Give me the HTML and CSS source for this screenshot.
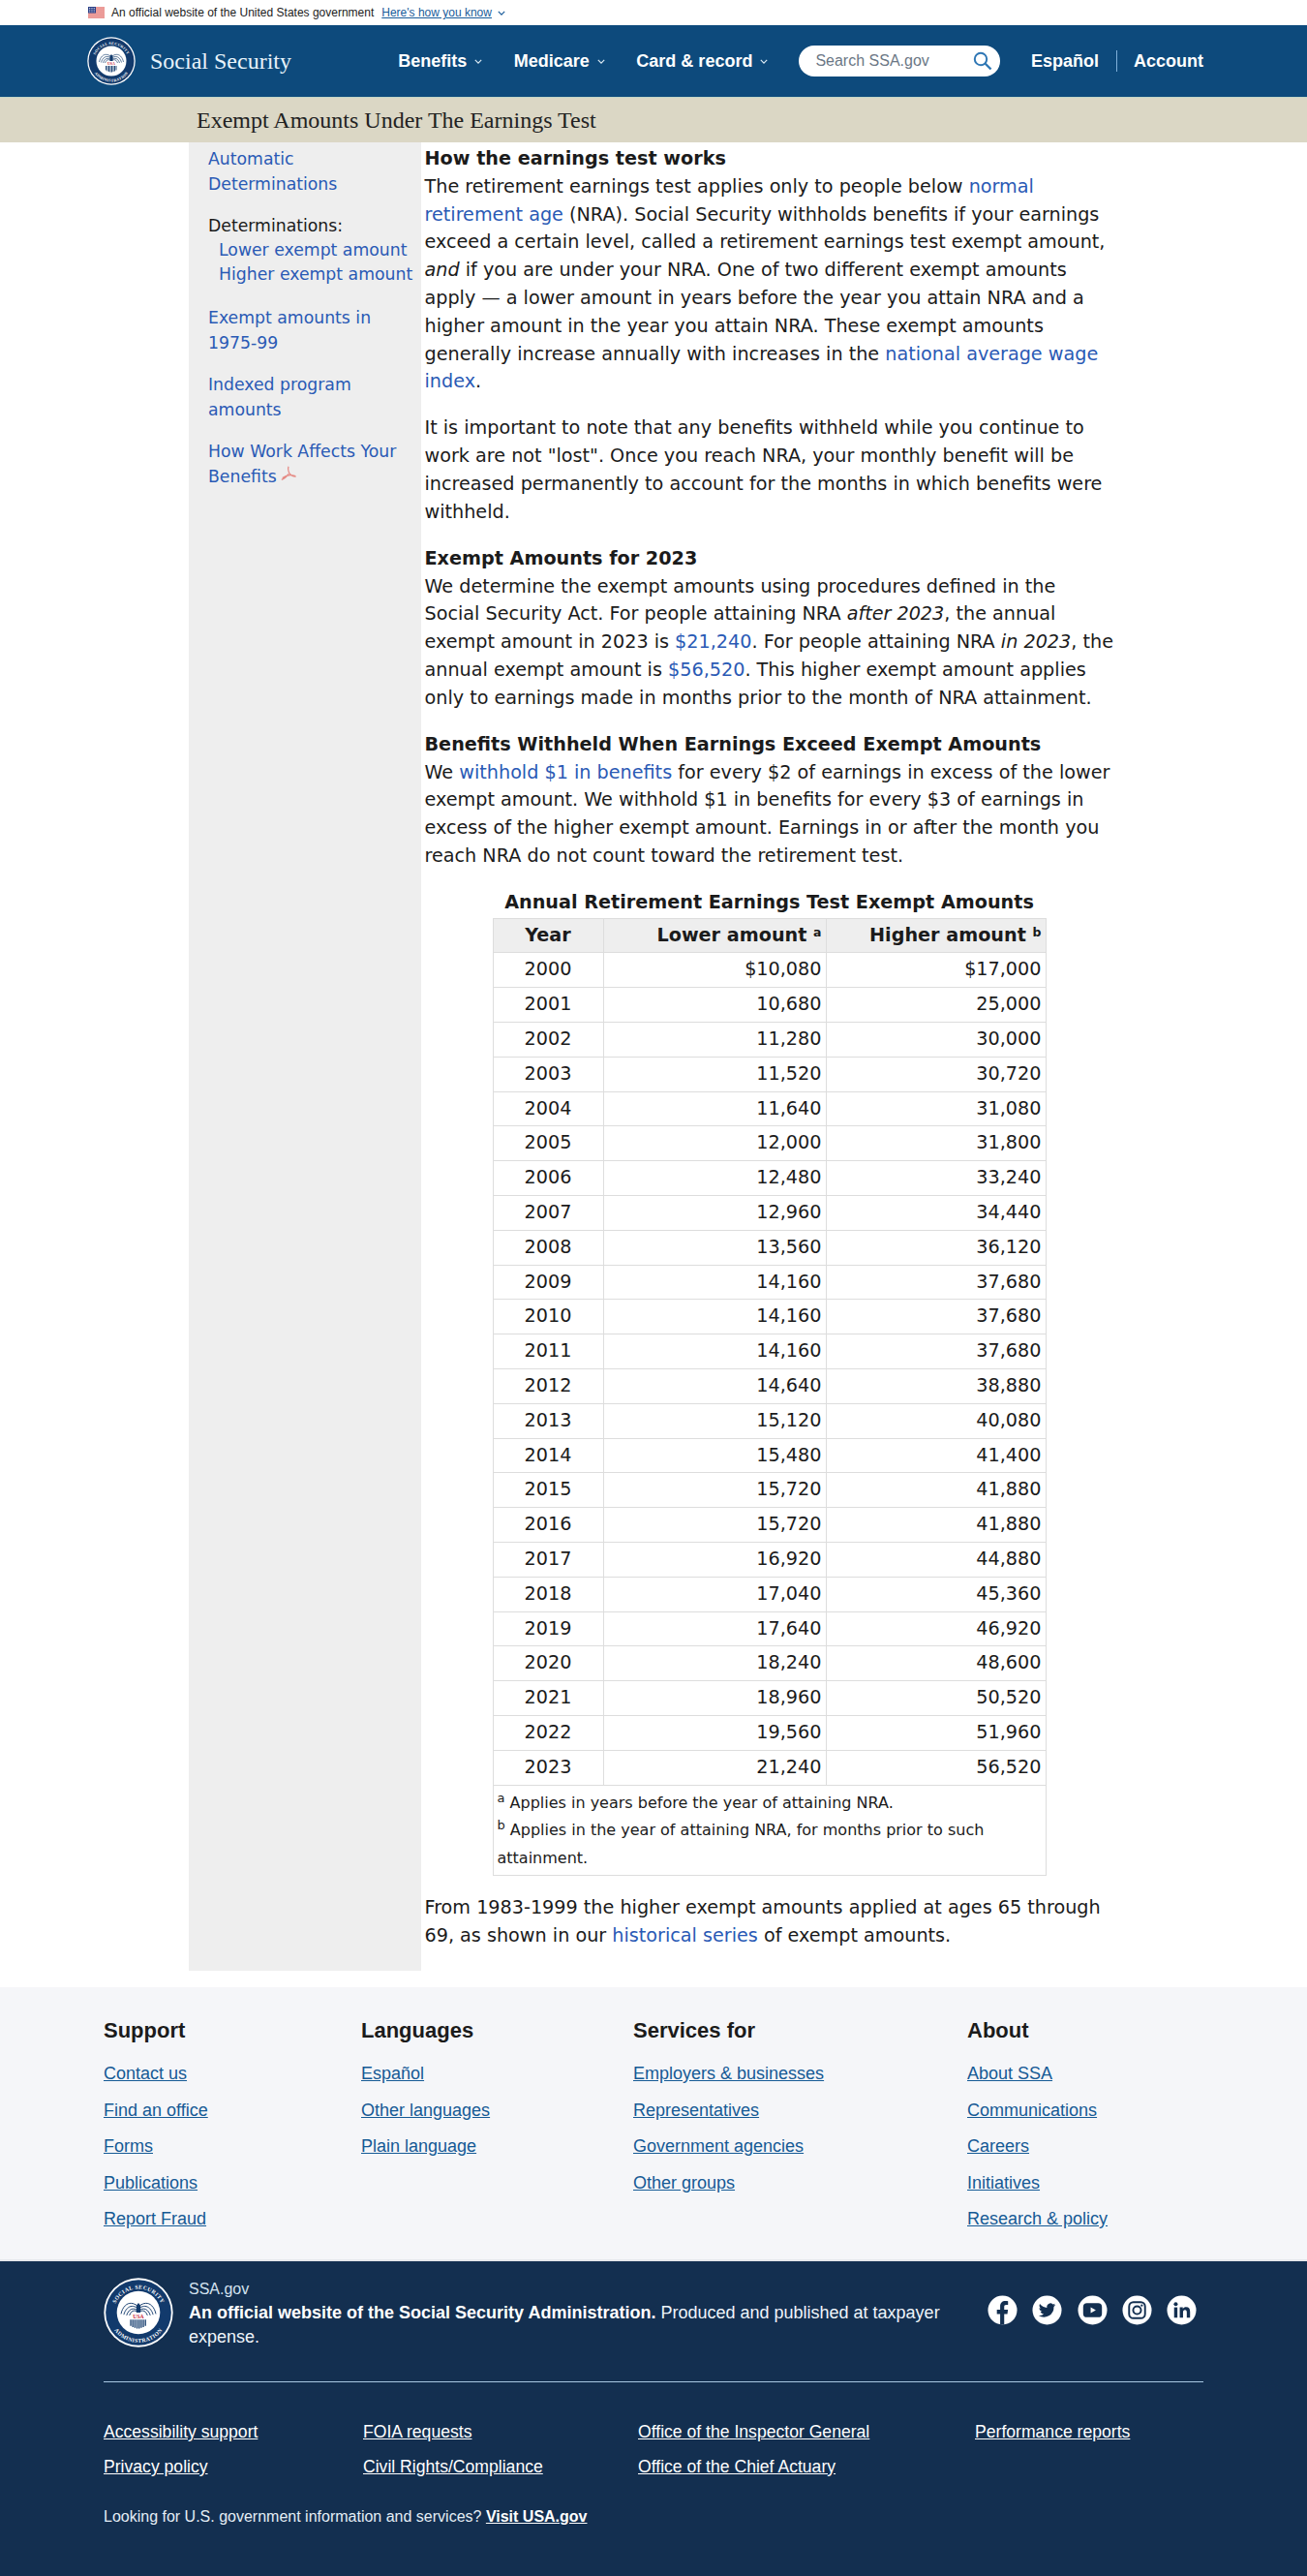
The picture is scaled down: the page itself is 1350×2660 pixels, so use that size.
FILE: index.html
```html
<!DOCTYPE html>
<html lang="en">
<head>
<meta charset="utf-8">
<title>Exempt Amounts Under The Earnings Test</title>
<link rel="stylesheet" href="styles.css">
</head>
<body>
<svg class="defs" width="0" height="0" aria-hidden="true">
  <defs>
    <symbol id="seal" viewBox="0 0 100 100">
      <circle cx="50" cy="50" r="49.500" fill="#fff"/>
      <circle cx="50" cy="50" r="47" fill="#123a6c"/>
      <circle cx="50" cy="50" r="31" fill="#fff"/>
      <path id="sealTop" d="M14 52a36 36 0 0 1 72 0" fill="none"/>
      <path id="sealBot" d="M7 50a43 43 0 0 0 86 0" fill="none"/>
      <text class="seal-text"><textPath href="#sealTop" startOffset="50%" text-anchor="middle">SOCIAL SECURITY</textPath></text>
      <text class="seal-text"><textPath href="#sealBot" startOffset="50%" text-anchor="middle">ADMINISTRATION</textPath></text>
      <path d="M48 40c-5-4-12-5-17 0-3 3-5 7-6 12M48 43c-5-3-10-3-14 1-2 2-4 5-5 9M48 46c-4-2-8-2-11 1-2 2-3 4-4 7M48 48c-3-1-6-1-8 1-1 1-2 3-3 5M52 40c5-4 12-5 17 0 3 3 5 7 6 12M52 43c5-3 10-3 14 1 2 2 4 5 5 9M52 46c4-2 8-2 11 1 2 2 3 4 4 7M52 48c3-1 6-1 8 1 1 1 2 3 3 5" fill="none" stroke="#123a6c" stroke-width="1.300"/>
      <path d="M47 40l3-4 3 4v10h-6z" fill="#123a6c"/>
      <text class="seal-usa" x="50" y="58" text-anchor="middle">USA</text>
      <path d="M39 60v9M42 60v11M45 60v12M48 60v13M51 60v13M54 60v12M57 60v11M60 60v9" stroke="#123a6c" stroke-width="1.800" fill="none"/>
    </symbol>
  </defs>
</svg>

<div class="gov-banner">
  <div class="gov-inner">
    <svg class="flag" viewBox="0 0 17 12" width="17" height="12" aria-hidden="true">
      <rect width="17" height="12" fill="#fff"/>
      <path d="M0 1h17M0 3h17M0 5h17M0 7h17M0 9h17M0 11h17" stroke="#d83933" stroke-width="1"/>
      <rect width="8" height="6.500" fill="#2a3f86"/>
      <path d="M1 1.500h6M1 3.200h6M1 5h6" stroke="#dfe3f0" stroke-width=".8" stroke-dasharray="1 .7"/>
    </svg>
    <span class="gov-text">An official website of the United States government</span>
    <a class="gov-link" href="#">Here's how you know</a>
    <svg class="gov-chev" viewBox="0 0 10 6" width="8" height="5" aria-hidden="true"><path d="M1 1l4 4 4-4" fill="none" stroke="#1a5c9a" stroke-width="1.500"/></svg>
  </div>
</div>

<header class="site-header">
  <a class="brand" href="#">
    <svg class="brand-seal" aria-hidden="true"><use href="#seal"/></svg>
    <span class="brand-name">Social Security</span>
  </a>
  <nav class="main-nav">
    <a href="#">Benefits<svg class="nav-chev" viewBox="0 0 10 6" aria-hidden="true"><path d="M1 1l4 4 4-4"/></svg></a>
    <a href="#">Medicare<svg class="nav-chev" viewBox="0 0 10 6" aria-hidden="true"><path d="M1 1l4 4 4-4"/></svg></a>
    <a href="#">Card &amp; record<svg class="nav-chev" viewBox="0 0 10 6" aria-hidden="true"><path d="M1 1l4 4 4-4"/></svg></a>
  </nav>
  <div class="search">
    <span class="search-ph">Search SSA.gov</span>
    <svg class="search-icon" viewBox="0 0 20 20" width="20" height="20" aria-hidden="true"><circle cx="8" cy="8" r="6.200" fill="none" stroke="#2f77b5" stroke-width="2"/><path d="M12.500 12.500l6 6" stroke="#2f77b5" stroke-width="2.400"/></svg>
  </div>
  <div class="util-nav">
    <a href="#">Español</a>
    <span class="util-sep"></span>
    <a href="#">Account</a>
  </div>
</header>

<div class="title-band"><h1>Exempt Amounts Under The Earnings Test</h1></div>

<main class="layout">
  <aside class="side">
    <p class="side-group"><a href="#">Automatic Determinations</a></p>
    <div class="side-group side-det">
      <span>Determinations:</span>
      <a class="side-sub" href="#">Lower exempt amount</a>
      <a class="side-sub" href="#">Higher exempt amount</a>
    </div>
    <p class="side-group"><a href="#">Exempt amounts in 1975-99</a></p>
    <p class="side-group"><a href="#">Indexed program amounts</a></p>
    <p class="side-group"><a href="#">How Work Affects Your Benefits</a><svg class="pdf" viewBox="0 0 20 20" width="18" height="18" aria-hidden="true"><path d="M10 2c-1 3 0 6 1.500 8.500 1.500 2 4 3 7 3M10 10.500c-2 3-4.500 5.500-8 6.500M3 15c4-3 10-4 15-2" fill="none" stroke="#e58a84" stroke-width="1.400"/></svg></p>
  </aside>

  <article class="content">
    <section class="block">
      <h2>How the earnings test works</h2>
      <p>The retirement earnings test applies only to people below <a href="#">normal retirement age</a> (NRA). Social Security withholds benefits if your earnings exceed a certain level, called a retirement earnings test exempt amount, <em>and</em> if you are under your NRA. One of two different exempt amounts apply — a lower amount in years before the year you attain NRA and a higher amount in the year you attain NRA. These exempt amounts generally increase annually with increases in the <a href="#">national average wage index</a>.</p>
    </section>
    <section class="block">
      <p>It is important to note that any benefits withheld while you continue to work are not "lost". Once you reach NRA, your monthly benefit will be increased permanently to account for the months in which benefits were withheld.</p>
    </section>
    <section class="block">
      <h2>Exempt Amounts for 2023</h2>
      <p>We determine the exempt amounts using procedures defined in the Social Security Act. For people attaining NRA <em>after 2023</em>, the annual exempt amount in 2023 is <a href="#">$21,240</a>. For people attaining NRA <em>in 2023</em>, the annual exempt amount is <a href="#">$56,520</a>. This higher exempt amount applies only to earnings made in months prior to the month of NRA attainment.</p>
    </section>
    <section class="block">
      <h2>Benefits Withheld When Earnings Exceed Exempt Amounts</h2>
      <p>We <a href="#">withhold $1 in benefits</a> for every $2 of earnings in excess of the lower exempt amount. We withhold $1 in benefits for every $3 of earnings in excess of the higher exempt amount. Earnings in or after the month you reach NRA do not count toward the retirement test.</p>
    </section>

    <table class="amounts">
      <caption>Annual Retirement Earnings Test Exempt Amounts</caption>
      <thead>
        <tr><th class="c-year">Year</th><th class="c-low">Lower amount <sup>a</sup></th><th class="c-high">Higher amount <sup>b</sup></th></tr>
      </thead>
      <tbody>
        <tr><td class="c-year">2000</td><td>$10,080</td><td>$17,000</td></tr>
        <tr><td class="c-year">2001</td><td>10,680</td><td>25,000</td></tr>
        <tr><td class="c-year">2002</td><td>11,280</td><td>30,000</td></tr>
        <tr><td class="c-year">2003</td><td>11,520</td><td>30,720</td></tr>
        <tr><td class="c-year">2004</td><td>11,640</td><td>31,080</td></tr>
        <tr><td class="c-year">2005</td><td>12,000</td><td>31,800</td></tr>
        <tr><td class="c-year">2006</td><td>12,480</td><td>33,240</td></tr>
        <tr><td class="c-year">2007</td><td>12,960</td><td>34,440</td></tr>
        <tr><td class="c-year">2008</td><td>13,560</td><td>36,120</td></tr>
        <tr><td class="c-year">2009</td><td>14,160</td><td>37,680</td></tr>
        <tr><td class="c-year">2010</td><td>14,160</td><td>37,680</td></tr>
        <tr><td class="c-year">2011</td><td>14,160</td><td>37,680</td></tr>
        <tr><td class="c-year">2012</td><td>14,640</td><td>38,880</td></tr>
        <tr><td class="c-year">2013</td><td>15,120</td><td>40,080</td></tr>
        <tr><td class="c-year">2014</td><td>15,480</td><td>41,400</td></tr>
        <tr><td class="c-year">2015</td><td>15,720</td><td>41,880</td></tr>
        <tr><td class="c-year">2016</td><td>15,720</td><td>41,880</td></tr>
        <tr><td class="c-year">2017</td><td>16,920</td><td>44,880</td></tr>
        <tr><td class="c-year">2018</td><td>17,040</td><td>45,360</td></tr>
        <tr><td class="c-year">2019</td><td>17,640</td><td>46,920</td></tr>
        <tr><td class="c-year">2020</td><td>18,240</td><td>48,600</td></tr>
        <tr><td class="c-year">2021</td><td>18,960</td><td>50,520</td></tr>
        <tr><td class="c-year">2022</td><td>19,560</td><td>51,960</td></tr>
        <tr><td class="c-year">2023</td><td>21,240</td><td>56,520</td></tr>
      </tbody>
      <tfoot>
        <tr><td colspan="3"><sup>a</sup> Applies in years before the year of attaining NRA.<br><sup>b</sup> Applies in the year of attaining NRA, for months prior to such attainment.</td></tr>
      </tfoot>
    </table>

    <p class="closing">From 1983-1999 the higher exempt amounts applied at ages 65 through 69, as shown in our <a href="#">historical series</a> of exempt amounts.</p>
  </article>
</main>

<footer>
  <div class="foot-links">
    <div class="foot-col col-support">
      <h3>Support</h3>
      <a href="#">Contact us</a><a href="#">Find an office</a><a href="#">Forms</a><a href="#">Publications</a><a href="#">Report Fraud</a>
    </div>
    <div class="foot-col col-lang">
      <h3>Languages</h3>
      <a href="#">Español</a><a href="#">Other languages</a><a href="#">Plain language</a>
    </div>
    <div class="foot-col col-serv">
      <h3>Services for</h3>
      <a href="#">Employers &amp; businesses</a><a href="#">Representatives</a><a href="#">Government agencies</a><a href="#">Other groups</a>
    </div>
    <div class="foot-col col-about">
      <h3>About</h3>
      <a href="#">About SSA</a><a href="#">Communications</a><a href="#">Careers</a><a href="#">Initiatives</a><a href="#">Research &amp; policy</a>
    </div>
  </div>
  <div class="foot-dark">
    <div class="agency">
      <svg class="agency-seal" aria-hidden="true"><use href="#seal"/></svg>
      <div class="agency-text">
        <div class="agency-site">SSA.gov</div>
        <div class="agency-desc"><strong>An official website of the Social Security Administration.</strong> Produced and published at taxpayer expense.</div>
      </div>
      <div class="social">
        <svg viewBox="0 0 32 32" aria-label="Facebook"><circle cx="16" cy="16" r="15.500" fill="#fff"/><path d="M13.500 31.500V20H10v-4.500h3.500V12c0-3.700 2.200-5.700 5.500-5.700 1.200 0 2.300.1 2.900.2v3.900H20c-1.800 0-2.200.9-2.200 2.200v2.900h4l-.6 4.500h-3.400v11.500z" fill="#132f50"/></svg>
        <svg viewBox="0 0 32 32" aria-label="Twitter"><circle cx="16" cy="16" r="15.500" fill="#fff"/><path d="M25 10.400c-.7.300-1.400.5-2.100.6.800-.5 1.300-1.200 1.600-2-.7.400-1.500.7-2.300.9a3.700 3.700 0 0 0-6.300 3.400c-3-.2-5.800-1.600-7.600-3.900-1 1.700-.5 3.800 1.100 4.900-.6 0-1.200-.2-1.700-.5 0 1.800 1.200 3.300 3 3.700-.5.100-1.100.2-1.700.1.500 1.500 1.900 2.500 3.500 2.600A7.500 7.500 0 0 1 7 21.700a10.500 10.500 0 0 0 16.200-9.300c.7-.5 1.300-1.200 1.800-2z" fill="#132f50"/></svg>
        <svg viewBox="0 0 32 32" aria-label="YouTube"><circle cx="16" cy="16" r="15.500" fill="#fff"/><rect x="6" y="8.500" width="20" height="15" rx="4" fill="#132f50"/><path d="M14 12.800l5.500 3.200-5.500 3.200z" fill="#fff"/></svg>
        <svg viewBox="0 0 32 32" aria-label="Instagram"><circle cx="16" cy="16" r="15.500" fill="#fff"/><rect x="7.500" y="7.500" width="17" height="17" rx="4.500" fill="none" stroke="#132f50" stroke-width="2"/><circle cx="16" cy="16" r="4.200" fill="none" stroke="#132f50" stroke-width="2"/><circle cx="21" cy="11" r="1.200" fill="#132f50"/></svg>
        <svg viewBox="0 0 32 32" aria-label="LinkedIn"><circle cx="16" cy="16" r="15.500" fill="#fff"/><rect x="8" y="13" width="3.500" height="11" fill="#132f50"/><circle cx="9.750" cy="9.500" r="2.100" fill="#132f50"/><path d="M14 13h3.300v1.600c.7-1.200 2-1.900 3.500-1.900 3 0 4.200 1.900 4.200 5V24h-3.500v-5.500c0-1.600-.5-2.700-1.900-2.700-1.500 0-2.100 1.100-2.100 2.700V24H14z" fill="#132f50"/></svg>
      </div>
    </div>
    <div class="legal">
      <div class="legal-col col-a"><a href="#">Accessibility support</a><a href="#">Privacy policy</a></div>
      <div class="legal-col col-b"><a href="#">FOIA requests</a><a href="#">Civil Rights/Compliance</a></div>
      <div class="legal-col col-c"><a href="#">Office of the Inspector General</a><a href="#">Office of the Chief Actuary</a></div>
      <div class="legal-col col-d"><a href="#">Performance reports</a></div>
    </div>
    <p class="usa-line">Looking for U.S. government information and services? <a href="#">Visit USA.gov</a></p>
  </div>
</footer>
</body>
</html>
```

FILE: styles.css
```css
* { box-sizing: border-box; }
html, body { margin: 0; padding: 0; }
body { font-family: "DejaVu Sans", sans-serif; color: #1b1b1b; background: #fff; }
.defs { display: block; height: 0; }
.seal-text { font: 700 8px "Liberation Serif", serif; fill: #fff; letter-spacing: .6px; }
.seal-usa { font: 700 8px "Liberation Serif", serif; fill: #c8283a; }

.gov-banner { height: 26px; background: #fff; font-family: "Liberation Sans", Arial, sans-serif; font-size: 12px; }
.gov-inner { display: flex; align-items: center; height: 26px; padding-left: 91px; color: #1b1b1b; }
.flag { margin-right: 7px; }
.gov-link { margin-left: 8px; color: #1a5c9a; text-decoration: underline; }
.gov-chev { margin-left: 6px; }

.site-header { display: flex; align-items: center; height: 75px; background: #0d4a7c; border-bottom: 1px solid #c3d6c8; padding: 0 107px 0 90px; font-family: "Liberation Sans", Arial, sans-serif; }
.brand { display: flex; align-items: center; width: 322px; color: #fff; text-decoration: none; }
.brand-seal { width: 50px; height: 50px; margin-right: 15px; }
.brand-name { font: 24px "Liberation Serif", serif; color: #e8f3fb; }
.main-nav { display: flex; width: 415px; gap: 32.500px; }
.main-nav a { display: flex; align-items: center; color: #fff; font-size: 18px; font-weight: 700; text-decoration: none; }
.nav-chev { width: 8px; height: 5px; margin-left: 8px; margin-top: 1px; }
.nav-chev path { fill: none; stroke: #dcebf5; stroke-width: 1.500; }
.search { display: flex; align-items: center; justify-content: space-between; width: 208px; height: 32px; padding: 0 8px 0 17px; background: #fff; border-radius: 16px; }
.search-ph { font-size: 16px; color: #6b7785; }
.util-nav { display: flex; align-items: center; margin-left: 32px; }
.util-nav a { color: #fff; font-size: 18px; font-weight: 700; text-decoration: none; }
.util-sep { width: 1px; height: 22px; margin: 0 17px 0 18px; background: #7fb0da; }

.title-band { height: 46px; background: #dbd7c5; padding-left: 203px; display: flex; align-items: center; }
.title-band h1 { margin: 0; font: 400 24px "Liberation Serif", serif; color: #222; }

.layout { display: flex; width: 960px; margin: 0 auto; height: 1888px; }
.side { flex: 0 0 240px; background: #eee; padding: 4px 0 0 20px; font-size: 17.280px; line-height: 26px; }
.side a { color: #2a5ab5; text-decoration: none; }
.side-group { margin: 0 0 17px; }
.side-det { display: flex; flex-direction: column; margin-bottom: 18.500px; }
.side-sub { display: block; margin-left: 11px; line-height: 25px; white-space: nowrap; }
.pdf { margin-left: 3px; vertical-align: 0; }

.content { flex: 1; padding: 3px 3.500px 0 3.500px; font-size: 19.200px; line-height: 28.800px; }
.content a { color: #2a5ab5; text-decoration: none; }
.content p { margin: 0; }
.content h2 { margin: 0; font-size: 19.200px; line-height: 28.800px; font-weight: 700; }
.block { margin-bottom: 19.200px; }

.amounts { width: 572px; margin: 0 0 0 70px; border-collapse: collapse; table-layout: fixed; line-height: 28.800px; }
.amounts caption { font-weight: 700; padding-bottom: 1px; }
.amounts th, .amounts td { border: 1px solid #ddd; padding: 3px 4px; text-align: right; }
.amounts th { background: #eee; font-weight: 700; }
.amounts .c-year { width: 114px; text-align: center; }
.amounts .c-low { width: 230px; }
.amounts sup { font-size: 12.500px; line-height: 0; vertical-align: 5px; }
.amounts tfoot td { padding: 4px 4px 2px; text-align: left; font-size: 16px; }
.amounts tfoot sup { font-size: 13px; font-weight: 400; vertical-align: 6px; }

.closing { margin-top: 19.200px !important; }

.foot-links { display: flex; height: 283px; margin-top: 17px; background: #f5f6f9; border-bottom: 2px solid #e6e8ec; padding: 30px 0 0 107px; font-family: "Liberation Sans", Arial, sans-serif; }
.foot-col { display: flex; flex-direction: column; }
.col-support { width: 266px; }
.col-lang { width: 281px; }
.col-serv { width: 345px; }
.foot-col h3 { margin: 0 0 11px; font-size: 22px; line-height: 30px; font-weight: 700; color: #1b1b1b; }
.foot-col a { font-size: 18px; line-height: 37.500px; color: #155a95; text-decoration: underline; }

.foot-dark { height: 325px; background: #132f50; padding: 17px 107px 0; font-family: "Liberation Sans", Arial, sans-serif; color: #fff; }
.agency { display: flex; align-items: flex-start; height: 108px; border-bottom: 1px solid #a9c8e4; }
.agency-seal { flex: none; width: 72px; height: 72px; margin-right: 16px; }
.agency-text { width: 800px; font-size: 18px; line-height: 25px; color: #eef4fa; }
.agency-desc strong { color: #fff; }
.agency-site { font-size: 16px; line-height: 24px; color: #d4e2ef; }
.social { display: flex; gap: 15.300px; margin-left: 25px; margin-top: 18px; }
.social svg { width: 31px; height: 31px; }
.legal { display: flex; padding-top: 33px; font-size: 17.600px; }
.legal-col { display: flex; flex-direction: column; }
.col-a { width: 268px; }
.col-b { width: 284px; }
.col-c { width: 348px; }
.legal-col a { line-height: 36px; color: #fff; text-decoration: underline; }
.usa-line { margin: 22px 0 0; font-size: 16px; line-height: 24px; color: #e4edf5; }
.usa-line a { color: #fff; font-weight: 700; text-decoration: underline; }
```
